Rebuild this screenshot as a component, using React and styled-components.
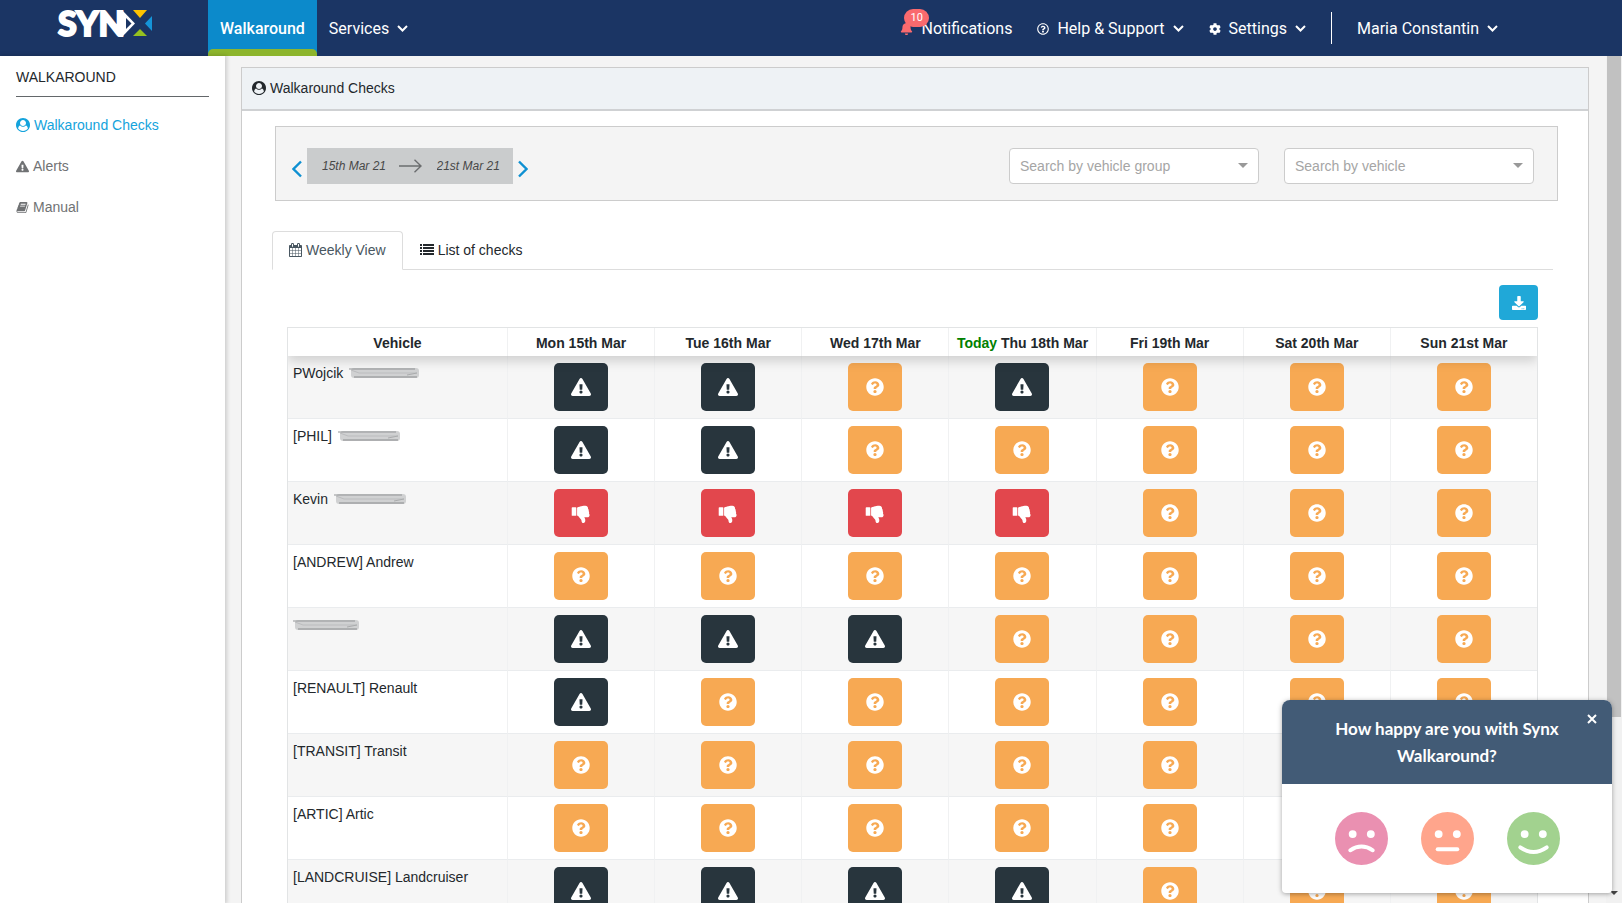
import React from 'react';
import styled, { createGlobalStyle, css } from 'styled-components';
import {
  FaBell,
  FaCog,
  FaDownload,
  FaExclamationTriangle,
  FaQuestionCircle,
  FaRegQuestionCircle,
} from 'react-icons/fa';

const days = [
  'Mon 15th Mar',
  'Tue 16th Mar',
  'Wed 17th Mar',
  'Thu 18th Mar',
  'Fri 19th Mar',
  'Sat 20th Mar',
  'Sun 21st Mar',
];
const today = 'Thu 18th Mar';

// a = alert, d = failed, q = no check yet
const vehicles = [
  { id: 1, name: 'PWojcik', hidden: 72, checks: 'aaqaqqq' },
  { id: 2, name: '[PHIL]', hidden: 64, checks: 'aaqqqqq' },
  { id: 3, name: 'Kevin', hidden: 74, checks: 'ddddqqq' },
  { id: 4, name: '[ANDREW] Andrew', checks: 'qqqqqqq' },
  { id: 5, name: '', hidden: 68, checks: 'aaaqqqq' },
  { id: 6, name: '[RENAULT] Renault', checks: 'aqqqqqq' },
  { id: 7, name: '[TRANSIT] Transit', checks: 'qqqqqqq' },
  { id: 8, name: '[ARTIC] Artic', checks: 'qqqqqqq' },
  { id: 9, name: '[LANDCRUISE] Landcruiser', checks: 'aaaaqqq' },
];

const Chevron = () => (
  <svg width="11" height="7" viewBox="0 0 11 7" fill="none" aria-hidden="true">
    <path d="M1 1l4.5 4.5L10 1" stroke="currentColor" strokeWidth="2" />
  </svg>
);

const UserCircle = () => (
  <svg width="14" height="14" viewBox="0 0 1792 1792" fill="currentColor" aria-hidden="true">
    <path d="M1523 1339q-22-155-87.5-257.5t-184.5-118.5q-67 74-159.5 115.5t-195.5 41.5-195.5-41.5-159.5-115.5q-119 16-184.5 118.5t-87.5 257.5q106 150 271 237.5t356 87.5 356-87.5 271-237.5zm-243-699q0-159-112.5-271.5t-271.5-112.5-271.5 112.5-112.5 271.5 112.5 271.5 271.5 112.5 271.5-112.5 112.5-271.5zm512 256q0 182-71 347.5t-190.5 286-285.5 191.5-349 71q-182 0-348-71t-286-191-191-286-71-348 71-348 191-286 286-191 348-71 348 71 286 191 191 286 71 348z" />
  </svg>
);

const ThumbsDown = () => (
  <svg width="20" height="20" viewBox="0 0 1792 1792" fill="currentColor" aria-hidden="true">
    <path d="M320 576q0-26-19-45t-45-19-45 19-19 45 19 45 45 19 45-19 19-45zm160 512v-640q0-26-19-45t-45-19h-288q-26 0-45 19t-19 45v640q0 26 19 45t45 19h288q26 0 45-19t19-45zm1129-149q55 61 55 149-1 78-57.5 135t-134.5 57h-277q4 14 8 24t11 22 10 18q18 37 27 57t19 58.5 10 76.5q0 24-.5 39t-5 45-12 50-24 45-40 40.5-60 26-82.5 10.5q-26 0-45-19-20-20-34-50t-19.5-52-12.5-61q-9-42-13.5-60.5t-17.5-48.5-31-48q-33-33-101-120-49-64-101-121t-76-59q-25-2-43-20.5t-18-43.5v-641q0-26 19-44.5t45-19.5q35-1 158-44 77-26 120.5-39.5t121.5-29 144-15.5h129q133 2 197 78 58 69 49 181 39 37 54 94 17 61 0 117 46 61 43 137 0 32-15 76z" />
  </svg>
);

const Book = () => (
  <svg width="13" height="13" viewBox="0 0 1792 1792" fill="currentColor" aria-hidden="true">
    <path d="M1703 478q40 57 18 129l-275 906q-19 64-76.5 107.5t-122.5 43.5h-923q-77 0-148.5-53.5t-99.5-131.5q-24-67-2-127 0-4 3-27t4-37q1-8-3-21.5t-3-19.5q2-11 8-21t16.5-23.5 16.5-23.5q23-38 45-91.5t30-91.5q3-10 .5-30t-.5-28q3-11 17-28t17-23q21-36 42-92t25-90q1-9-2.5-32t.5-28q4-13 22-30.5t22-22.5q19-26 42.5-84.5t27.5-96.5q1-8-3-25.5t-2-26.5q2-8 9-18t18-23 17-21q8-12 16.5-30.5t15-35 16-36 19.5-32 26.5-23.5 36-11.5 47.5 5.5l-1 3q38-9 51-9h761q74 0 114 56t18 130l-274 906q-36 119-71.5 153.5t-128.5 34.5h-869q-27 0-38 15-11 16-1 43 24 70 144 70h923q29 0 56-15.5t35-41.5l300-987q7-22 5-57 38 15 59 43zm-1064 2q-4 13 2 22.5t20 9.5h608q13 0 25.5-9.5t16.5-22.5l21-64q4-13-2-22.5t-20-9.5h-608q-13 0-25.5 9.5t-16.5 22.5zm-83 256q-4 13 2 22.5t20 9.5h608q13 0 25.5-9.5t16.5-22.5l21-64q4-13-2-22.5t-20-9.5h-608q-13 0-25.5 9.5t-16.5 22.5z" />
  </svg>
);

const Calendar = () => (
  <svg width="13" height="14" viewBox="0 0 1664 1792" fill="currentColor" aria-hidden="true">
    <path
      transform="translate(-64 0)"
      d="M192 1664h288v-288h-288v288zm352 0h320v-288h-320v288zm-352-352h288v-320h-288v320zm352 0h320v-320h-320v320zm-352-384h288v-288h-288v288zm736 736h320v-288h-320v288zm-384-736h320v-288h-320v288zm768 736h288v-288h-288v288zm-384-352h320v-320h-320v320zm-352-864v-288q0-13-9.5-22.5t-22.5-9.5h-64q-13 0-22.5 9.5t-9.5 22.5v288q0 13 9.5 22.5t22.5 9.5h64q13 0 22.5-9.5t9.5-22.5zm736 864h288v-320h-288v320zm-384-384h320v-288h-320v288zm384 0h288v-288h-288v288zm32-480v-288q0-13-9.5-22.5t-22.5-9.5h-64q-13 0-22.5 9.5t-9.5 22.5v288q0 13 9.5 22.5t22.5 9.5h64q13 0 22.5-9.5t9.5-22.5zm384-64v1280q0 52-38 90t-90 38h-1408q-52 0-90-38t-38-90v-1280q0-52 38-90t90-38h128v-96q0-66 47-113t113-47h64q66 0 113 47t47 113v96h384v-96q0-66 47-113t113-47h64q66 0 113 47t47 113v96h128q52 0 90 38t38 90z"
    />
  </svg>
);

const ListIcon = () => (
  <svg width="14" height="12" viewBox="0 0 14 12" fill="currentColor" aria-hidden="true">
    {[0, 3, 6, 9].map(y => (
      <path key={y} d={`M0 ${y}h2v2h-2zM3 ${y}h11v2h-11z`} />
    ))}
  </svg>
);

const LogoMark = () => (
  <svg width="96" height="48" viewBox="0 0 96 48" role="img" aria-label="Synx">
    <text
      x="1"
      y="36"
      fill="#fff"
      stroke="#fff"
      strokeWidth="2"
      fontFamily="Lato, sans-serif"
      fontWeight="900"
      fontSize="34"
    >
      SYN
    </text>
    <path d="M65 10l13 13.5L65 37z" fill="#fff" />
    <path d="M69 18l5.5 5.5L69 29z" fill="#1b3564" />
    <path d="M76 10h14l-7 8z" fill="#fdc300" />
    <path d="M95 16v15l-7-7.5z" fill="#1594d8" />
    <path d="M76 36h14l-7-7z" fill="#95c11f" />
  </svg>
);

// Marker stroke over a name that should not be readable
const Scribble = ({ width }) => (
  <svg width={width} height="12" viewBox={`0 0 ${width} 12`} role="img" aria-label="Hidden name">
    <rect x="2" y="1" width={width - 4} height="10" rx="3" fill="#d0d1d2" />
    <path d={`M0 2h${width - 6}`} stroke="#939597" />
    <path d={`M5 10h${width - 9}`} stroke="#8b8d8f" />
    <path d={`M2 3l8 3h${width - 14}`} stroke="#bbbcbe" fill="none" />
    <path d={`M${width - 14} 8l10-2`} stroke="#aaacad" fill="none" />
  </svg>
);

const Face = ({ color, mouth }) => (
  <svg width="53" height="53" viewBox="0 0 54 54" aria-hidden="true">
    <circle cx="27" cy="27" r="27" fill={color} />
    <circle cx="18" cy="22.5" r="4" fill="#fff" />
    <circle cx="36.5" cy="22.5" r="4" fill="#fff" />
    <path d={mouth} stroke="#fff" strokeWidth="4" strokeLinecap="round" fill="none" />
  </svg>
);

const statuses = {
  a: { label: 'Alert', color: '#28353d', icon: <FaExclamationTriangle size={20} /> },
  d: { label: 'Failed', color: '#e2474d', icon: <ThumbsDown /> },
  q: { label: 'No check', color: '#f7a953', icon: <FaQuestionCircle size={18} /> },
};

export default function App() {
  return (
    <Page>
      <GlobalStyle />
      <Header>
        <Logo href="#home">
          <LogoMark />
        </Logo>
        <ProductLink href="#walkaround">Walkaround</ProductLink>
        <NavButton>
          Services <Chevron />
        </NavButton>
        <UserNav>
          <Notifications href="#notifications">
            <FaBell size={13} color="#fa6a6e" />
            <Badge>10</Badge>
            Notifications
          </Notifications>
          <NavButton>
            <FaRegQuestionCircle size={12} />
            Help &amp; Support <Chevron />
          </NavButton>
          <NavButton>
            <FaCog size={12} />
            Settings <Chevron />
          </NavButton>
          <Divider />
          <NavButton>
            Maria Constantin <Chevron />
          </NavButton>
        </UserNav>
      </Header>
      <Body>
        <Sidebar>
          <SidebarTitle>WALKAROUND</SidebarTitle>
          <SidebarLink href="#checks" $active>
            <UserCircle /> Walkaround Checks
          </SidebarLink>
          <SidebarLink href="#alerts">
            <FaExclamationTriangle size={13} /> Alerts
          </SidebarLink>
          <SidebarLink href="#manual">
            <Book /> Manual
          </SidebarLink>
        </Sidebar>
        <Main>
          <Panel>
            <PanelTitle>
              <UserCircle /> Walkaround Checks
            </PanelTitle>
            <Filters>
              <WeekPicker>
                <StepButton aria-label="Previous week">
                  <svg width="10" height="18" viewBox="0 0 10 18" fill="none">
                    <path d="M9 1.5L1.5 9 9 16.5" stroke="currentColor" strokeWidth="2.4" />
                  </svg>
                </StepButton>
                <DateRange>
                  <DateInput aria-label="Start date" defaultValue="15th Mar 21" />
                  <svg width="23" height="14" viewBox="0 0 23 14" fill="none" aria-hidden="true">
                    <path d="M0 7h22M15.5 .8L22 7l-6.5 6.2" stroke="#6b6d6f" strokeWidth="1.4" />
                  </svg>
                  <DateInput aria-label="End date" defaultValue="21st Mar 21" />
                </DateRange>
                <StepButton aria-label="Next week">
                  <svg width="10" height="18" viewBox="0 0 10 18" fill="none">
                    <path d="M1 1.5L8.5 9 1 16.5" stroke="currentColor" strokeWidth="2.4" />
                  </svg>
                </StepButton>
              </WeekPicker>
              <Searches>
                {['Search by vehicle group', 'Search by vehicle'].map(label => (
                  <SelectBox key={label}>
                    <Select aria-label={label} defaultValue="">
                      <option value="">{label}</option>
                    </Select>
                  </SelectBox>
                ))}
              </Searches>
            </Filters>
            <Tabs role="tablist">
              <Tab role="tab" aria-selected="true" $active>
                <Calendar /> Weekly View
              </Tab>
              <Tab role="tab" aria-selected="false">
                <ListIcon /> List of checks
              </Tab>
            </Tabs>
            <TableArea>
              <DownloadButton aria-label="Download">
                <FaDownload size={14} />
              </DownloadButton>
              <Table>
                <colgroup>
                  <VehicleCol />
                  <col span="7" />
                </colgroup>
                <Head>
                  <tr>
                    <HeadCell scope="col">Vehicle</HeadCell>
                    {days.map(day => (
                      <HeadCell key={day} scope="col">
                        {day === today && <Today>Today </Today>}
                        {day}
                      </HeadCell>
                    ))}
                  </tr>
                </Head>
                <tbody>
                  {vehicles.map(({ id, name, hidden, checks }) => (
                    <Row key={id}>
                      <Cell>
                        <VehicleName>
                          {name}
                          {hidden && <Scribble width={hidden} />}
                        </VehicleName>
                      </Cell>
                      {checks.split('').map((check, i) => (
                        <Cell key={days[i]}>
                          <CheckButton
                            $color={statuses[check].color}
                            aria-label={`${statuses[check].label}, ${days[i]}`}
                          >
                            {statuses[check].icon}
                          </CheckButton>
                        </Cell>
                      ))}
                    </Row>
                  ))}
                </tbody>
              </Table>
            </TableArea>
          </Panel>
        </Main>
        <ScrollTrack>
          <ScrollThumb />
          <ScrollArrow />
        </ScrollTrack>
      </Body>
      <Survey aria-label="Feedback">
        <SurveyHeader>
          <SurveyTitle>How happy are you with Synx Walkaround?</SurveyTitle>
          <CloseButton aria-label="Close">
            <svg width="10" height="10" viewBox="0 0 10 10">
              <path d="M1 1l8 8M9 1L1 9" stroke="#fff" strokeWidth="2" />
            </svg>
          </CloseButton>
        </SurveyHeader>
        <Faces>
          <FaceButton aria-label="Unhappy">
            <Face color="#ea90b1" mouth="M15.5 39Q27 31.5 38.5 39" />
          </FaceButton>
          <FaceButton aria-label="Neutral">
            <Face color="#ffa58c" mouth="M17 38h20" />
          </FaceButton>
          <FaceButton aria-label="Happy">
            <Face color="#a2d28f" mouth="M13.5 36Q27 45.5 40.5 36" />
          </FaceButton>
        </Faces>
      </Survey>
    </Page>
  );
}

const GlobalStyle = createGlobalStyle`
  * {
    box-sizing: border-box;
  }
  body {
    margin: 0;
    overflow: hidden;
    font: 14px/20px 'Liberation Sans', Arial, sans-serif;
    color: #23282c;
  }
  button, input, select {
    font: inherit;
    color: inherit;
  }
  button {
    border: 0;
    padding: 0;
    background: none;
    cursor: pointer;
  }
  a {
    color: inherit;
    text-decoration: none;
  }
  svg {
    flex: none;
  }
`;

const Page = styled.div`
  height: 100vh;
  display: flex;
  flex-direction: column;
`;

const Header = styled.header`
  flex: none;
  height: 56px;
  display: flex;
  align-items: center;
  padding-right: 124px;
  background: #1b3564;
  color: #fff;
  font-family: Roboto, sans-serif;
  font-size: 16px;
  line-height: 22px;
`;

const Logo = styled.a`
  width: 208px;
  height: 56px;
  padding-left: 57px;
`;

const ProductLink = styled.a`
  position: relative;
  height: 56px;
  padding: 18px 12px 0;
  margin-right: 12px;
  background: #0c8acb;
  font-weight: 500;

  &:after {
    content: '';
    position: absolute;
    right: 0;
    bottom: 0;
    left: 0;
    height: 7px;
    border-radius: 5px 5px 0 0;
    background: #8db52c;
  }
`;

const NavButton = styled.button`
  display: flex;
  align-items: center;
  gap: 8px;
  padding-top: 1px;
  white-space: nowrap;
`;

const UserNav = styled.nav`
  margin-left: auto;
  display: flex;
  align-items: center;
  gap: 25px;
`;

const Notifications = styled.a`
  position: relative;
  display: flex;
  align-items: center;
  gap: 8px;
  padding-top: 1px;
`;

const Badge = styled.span`
  position: absolute;
  top: -8px;
  left: 4px;
  padding: 0 6px;
  border-radius: 9px;
  background: #fa6a6e;
  font-size: 11px;
  line-height: 18px;
`;

const Divider = styled.span`
  width: 1px;
  height: 32px;
  background: #fff;
`;

const Body = styled.div`
  flex: 1;
  min-height: 0;
  display: flex;
`;

const Sidebar = styled.aside`
  flex: none;
  width: 225px;
  padding: 11px 16px;
  z-index: 1;
  background: #fff;
  box-shadow: 1px 0 4px 1px rgba(0, 0, 0, 0.16);
`;

const SidebarTitle = styled.h2`
  margin: 0 0 18px;
  padding-bottom: 9px;
  border-bottom: 1px solid #63676a;
  font-size: 14px;
  font-weight: 400;
`;

const iconText = css`
  display: flex;
  align-items: center;
  gap: 4px;
`;

const SidebarLink = styled.a`
  ${iconText}
  margin-bottom: 21px;
  color: ${props => (props.$active ? '#14a3dc' : '#707274')};
`;

const Main = styled.main`
  flex: 1;
  min-width: 0;
  overflow: hidden;
  padding: 11px 17px 0 16px;
  background: #f4f4f4;
`;

const Panel = styled.section`
  border: 1px solid #ccc;
  background: #fff;
`;

const PanelTitle = styled.h1`
  ${iconText}
  margin: 0;
  padding: 10px 10px 11px;
  border-bottom: 2px solid #cfd1d3;
  background: #eef2f5;
  font-size: 14px;
  font-weight: 400;
`;

const Filters = styled.div`
  display: flex;
  justify-content: space-between;
  margin: 15px 30px 30px 33px;
  padding: 21px 23px 16px 16px;
  border: 1px solid #ccc;
  background: #f4f4f4;
`;

const WeekPicker = styled.div`
  display: flex;
  align-items: center;
  gap: 5px;
`;

const StepButton = styled.button`
  height: 24px;
  padding-top: 6px;
  color: #0e90d2;
`;

const DateRange = styled.div`
  width: 206px;
  height: 36px;
  display: flex;
  align-items: center;
  background: #cacccd;
`;

const DateInput = styled.input`
  flex: 1;
  min-width: 0;
  padding: 0 0 0 15px;
  border: 0;
  background: none;
  font-size: 12px;
  font-style: italic;
  color: #484848;
`;

const Searches = styled.div`
  display: flex;
  gap: 25px;
`;

const SelectBox = styled.div`
  position: relative;

  &:after {
    content: '';
    position: absolute;
    top: 15px;
    right: 11px;
    border: 5px solid transparent;
    border-top-color: #999;
    pointer-events: none;
  }
`;

const Select = styled.select`
  appearance: none;
  width: 250px;
  height: 36px;
  padding: 0 10px;
  border: 1px solid #ccc;
  border-radius: 4px;
  background: #fff;
  color: #a5a5a5;
`;

const Tabs = styled.div`
  display: flex;
  margin: 0 35px 0 30px;
  border-bottom: 1px solid #ddd;
`;

const Tab = styled.button`
  ${iconText}
  height: 39px;
  margin-bottom: -1px;
  padding: 0 16px 2px;
  border: 1px solid transparent;
  border-radius: 4px 4px 0 0;

  ${props =>
    props.$active &&
    css`
      border-color: #ddd #ddd #fff;
      background: #fff;
      color: #495761;
    `}
`;

const TableArea = styled.div`
  padding: 15px 50px 0 45px;
`;

const DownloadButton = styled.button`
  display: flex;
  align-items: center;
  justify-content: center;
  width: 39px;
  height: 35px;
  margin: 0 0 7px auto;
  border-radius: 4px;
  background: #20a8d8;
  color: #fff;
`;

const Table = styled.table`
  width: 100%;
  table-layout: fixed;
  border-spacing: 0;
  border: 1px solid #e2e4e5;
`;

const VehicleCol = styled.col`
  width: 219px;
`;

const Head = styled.thead`
  position: relative;
  background: #fff;
  box-shadow: 0 5px 12px rgba(0, 0, 0, 0.16);
  clip-path: inset(0 0 -20px 0);
`;

const HeadCell = styled.th`
  height: 28px;
  padding: 2px 0 0;
  border-left: 1px solid #f0f1f2;
  font-weight: 700;

  &:first-child {
    border-left: 0;
  }
`;

const Today = styled.span`
  color: #008000;
`;

const Row = styled.tr`
  &:nth-child(odd) {
    background: #f6f6f6;
  }
`;

const Cell = styled.td`
  padding: 7px 5px;
  border-left: 1px solid #f0f1f2;
  border-bottom: 1px solid #eaecee;
  vertical-align: top;

  &:first-child {
    border-left: 0;
  }
`;

const VehicleName = styled.div`
  display: flex;
  align-items: center;
  gap: 6px;
  min-height: 20px;
`;

const CheckButton = styled.button`
  display: flex;
  align-items: center;
  justify-content: center;
  width: 54px;
  height: 48px;
  margin: 0 auto;
  border-radius: 5px;
  background: ${props => props.$color};
  color: #fff;
`;

const ScrollTrack = styled.div`
  flex: none;
  width: 16px;
  display: flex;
  flex-direction: column;
  align-items: center;
  justify-content: space-between;
  background: #f1f1f1;
`;

const ScrollThumb = styled.div`
  width: 14px;
  height: 78%;
  background: #c1c1c1;
`;

const ScrollArrow = styled.div`
  margin-bottom: 8px;
  border: 4px solid transparent;
  border-top-color: #444;
  border-bottom: 0;
`;

const Survey = styled.section`
  position: fixed;
  right: 10px;
  bottom: 10px;
  z-index: 2;
  width: 330px;
  border-radius: 8px 8px 4px 4px;
  overflow: hidden;
  background: #fff;
  box-shadow: 0 1px 5px rgba(0, 0, 0, 0.35);
`;

const SurveyHeader = styled.header`
  position: relative;
  padding: 15px 48px;
  background: #425b76;
  color: #fff;
`;

const SurveyTitle = styled.h2`
  margin: 0;
  font: 700 17px/27px Lato, sans-serif;
  text-align: center;
`;

const CloseButton = styled.button`
  position: absolute;
  top: 14px;
  right: 15px;
  line-height: 10px;
`;

const Faces = styled.div`
  display: flex;
  justify-content: center;
  gap: 33px;
  padding: 28px 0;
`;

const FaceButton = styled.button`
  height: 53px;
`;
